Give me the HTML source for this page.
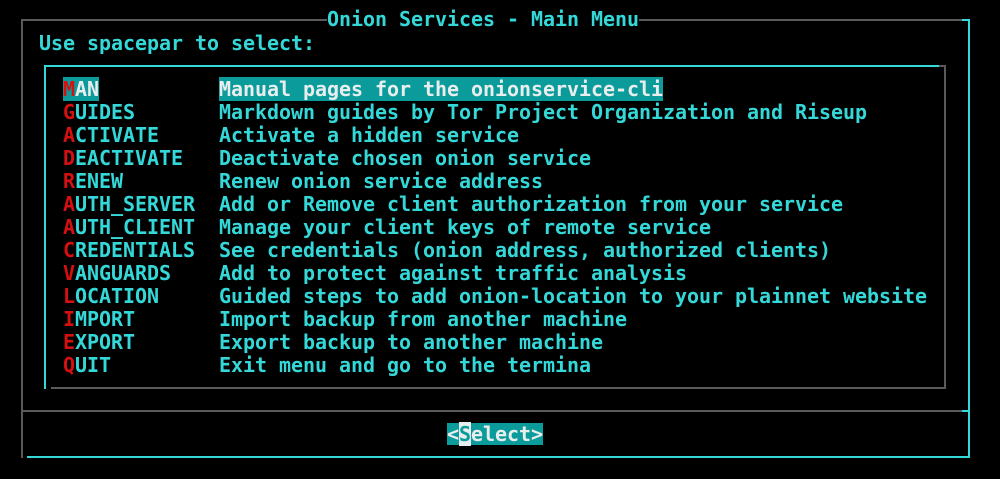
<!DOCTYPE html>
<html><head><style>
body{margin:0;background:#000;width:1000px;height:479px;overflow:hidden;position:relative;font-family:"DejaVu Sans Mono","Liberation Mono",monospace;font-weight:bold;font-size:20px;color:#35d8d8;letter-spacing:-0.04px}
.t{position:absolute;white-space:pre;line-height:23px}
.l{position:absolute}
.g{background:#5a5a5a}.c{background:#35d8d8}
.r{color:#d41010}
.h{background:#0c9b9b;color:#e8eeee}
</style></head><body>
<div class="l g" style="left:21px;top:19px;width:2px;height:439px"></div>
<div class="l g" style="left:21px;top:19px;width:947px;height:2px"></div>
<div class="l c" style="left:962px;top:19px;width:8px;height:2px"></div>
<div class="l c" style="left:968px;top:19px;width:2px;height:439px"></div>
<div class="l c" style="left:27px;top:456px;width:943px;height:2px"></div>
<div class="l g" style="left:21px;top:410px;width:941px;height:2px"></div>
<div class="l c" style="left:962px;top:410px;width:8px;height:2px"></div>
<div class="l c" style="left:44px;top:65px;width:2px;height:324px"></div>
<div class="l c" style="left:44px;top:65px;width:895px;height:2px"></div>
<div class="l g" style="left:939px;top:65px;width:7px;height:2px"></div>
<div class="l g" style="left:944px;top:65px;width:2px;height:324px"></div>
<div class="l g" style="left:51px;top:387px;width:895px;height:2px"></div>
<div class="t" style="left:327px;top:8px;background:#000">Onion Services - Main Menu</div>
<div class="t" style="left:39px;top:32px">Use spacepar to select:</div>
<div class="t" style="left:63px;top:78px"><span class="h"><span class="r">M</span>AN</span>
<span class="r">G</span>UIDES
<span class="r">A</span>CTIVATE
<span class="r">D</span>EACTIVATE
<span class="r">R</span>ENEW
<span class="r">A</span>UTH_SERVER
<span class="r">A</span>UTH_CLIENT
<span class="r">C</span>REDENTIALS
<span class="r">V</span>ANGUARDS
<span class="r">L</span>OCATION
<span class="r">I</span>MPORT
<span class="r">E</span>XPORT
<span class="r">Q</span>UIT</div>
<div class="t" style="left:219px;top:78px"><span class="h">Manual pages for the onionservice-cli</span>
Markdown guides by Tor Project Organization and Riseup
Activate a hidden service
Deactivate chosen onion service
Renew onion service address
Add or Remove client authorization from your service
Manage your client keys of remote service
See credentials (onion address, authorized clients)
Add to protect against traffic analysis
Guided steps to add onion-location to your plainnet website
Import backup from another machine
Export backup to another machine
Exit menu and go to the termina</div>
<div class="t h" style="left:447px;top:423px;height:22px;line-height:22px">&lt;<span style="background:#e8eeee;color:#0c9b9b">S</span>elect&gt;</div>
</body></html>
